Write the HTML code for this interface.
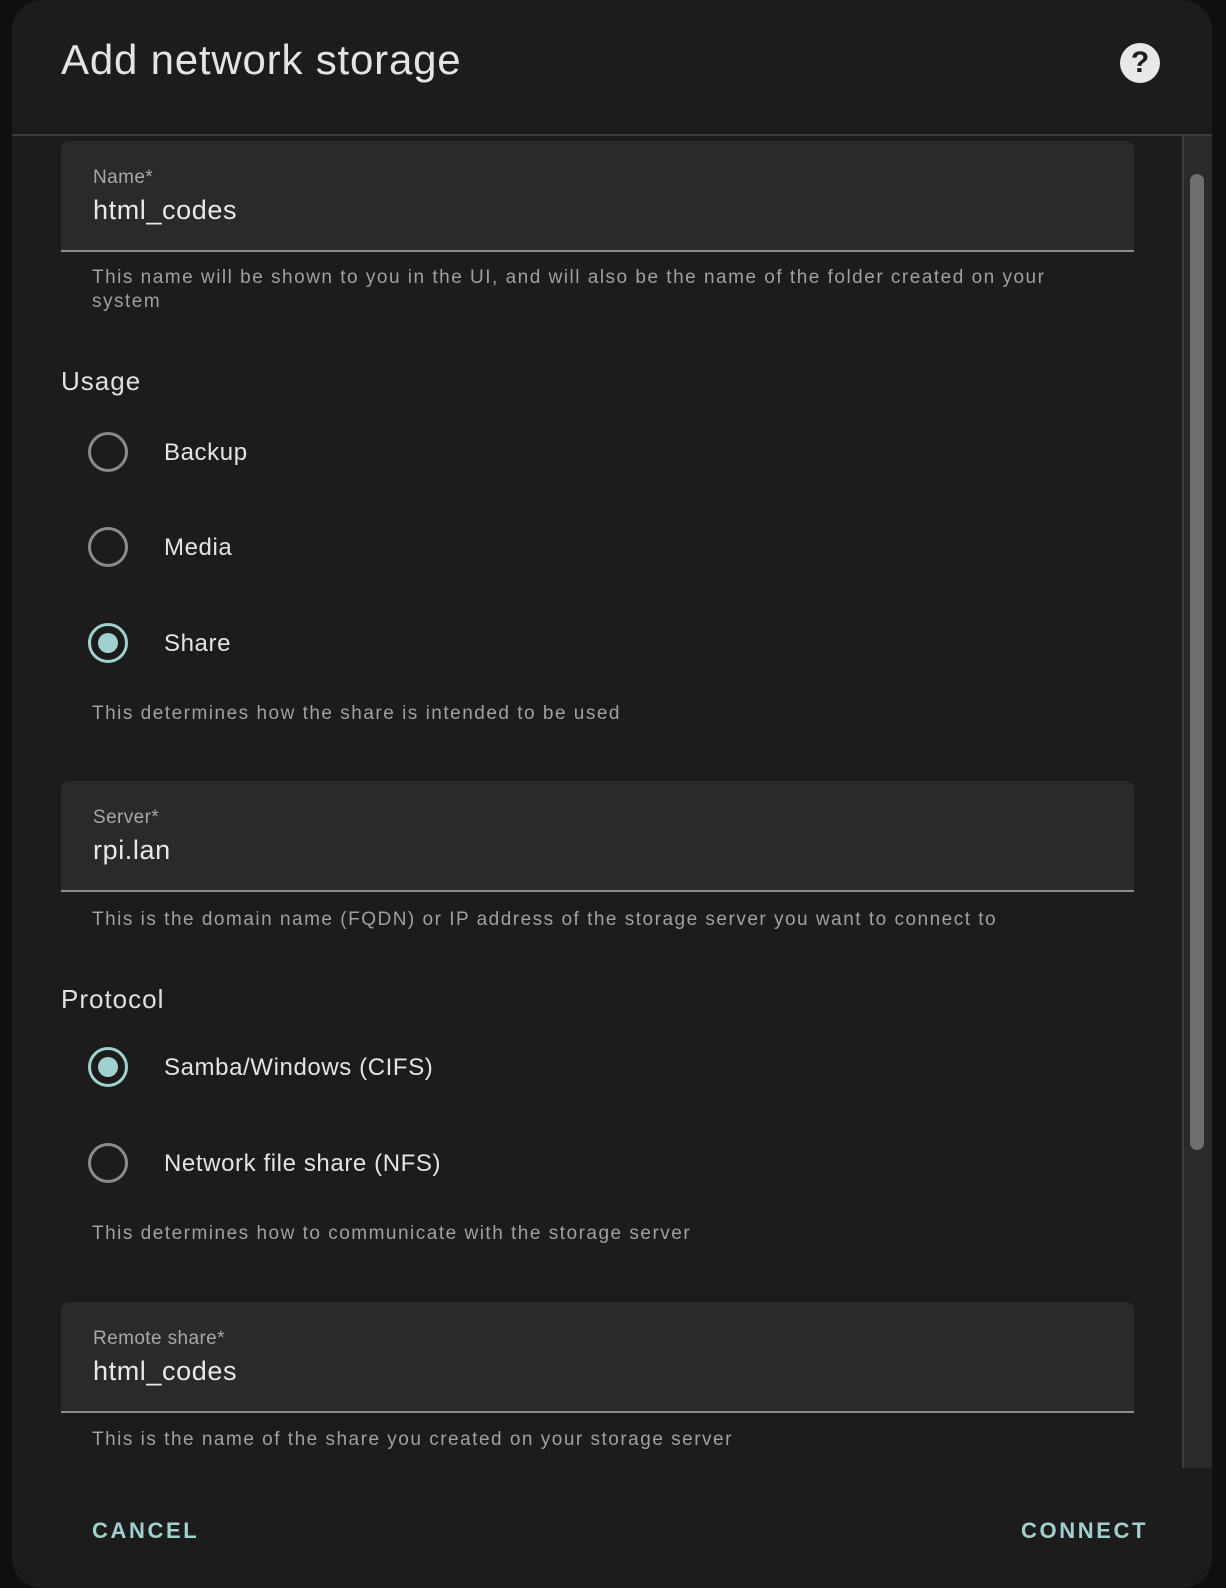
<!DOCTYPE html>
<html><head><meta charset="utf-8"><style>
*{margin:0;padding:0;box-sizing:border-box}
body{width:1226px;height:1588px;background:#0f0f0f;font-family:"Liberation Sans",sans-serif;position:relative;overflow:hidden}
.dlg{position:absolute;left:12px;top:0;width:1200px;height:1588px;background:#1c1c1c;border-radius:30px;overflow:hidden}
.a{position:absolute;white-space:nowrap}
.title{left:49px;top:36px;font-size:42px;color:#e4e4e4;letter-spacing:.8px}
.help{left:1108px;top:43px;width:40px;height:40px;border-radius:50%;background:#e8e8e8;color:#1c1c1c;font-weight:bold;font-size:30px;text-align:center;line-height:40px}
.div{left:0;top:134px;width:1200px;height:2px;background:#3a3a3a}
.track{left:1170px;top:136px;width:30px;height:1332px;background:#2a2a2a;border-left:2px solid #3c3c3c}
.thumb{left:1178px;top:174px;width:14px;height:976px;border-radius:7px;background:#6e6e6e}
.field{left:49px;width:1073px;height:111px;background:#2a2a2a;border-radius:8px 8px 0 0;border-bottom:2px solid #8a8a8a}
.lab{position:absolute;left:32px;top:26px;font-size:19px;color:#a8a8a8;letter-spacing:.4px}
.val{position:absolute;left:32px;top:54px;font-size:27px;color:#e8e8e8;letter-spacing:.6px}
.hint{left:80px;font-size:19px;color:#a0a0a0;letter-spacing:1.5px;line-height:24px}
.sec{left:49px;font-size:26px;color:#e0e0e0;letter-spacing:1px}
.r{position:absolute;left:76px;width:40px;height:40px;border-radius:50%;border:3px solid #8a8a8a}
.r.on{border-color:#a1d0cf}
.r.on::after{content:"";position:absolute;left:7px;top:7px;width:20px;height:20px;border-radius:50%;background:#a1d0cf}
.rl{left:152px;font-size:24px;color:#e4e4e4;letter-spacing:.6px}
.btn{font-size:22px;color:#a1d0cf;letter-spacing:2.6px;font-weight:bold}
</style></head><body>
<div class="dlg">
<div class="a title">Add network storage</div>
<div class="a help">?</div>
<div class="a div"></div>
<div class="a track"></div><div class="a thumb"></div>

<div class="a field" style="top:141px"><div class="lab">Name*</div><div class="val">html_codes</div></div>
<div class="a hint" style="top:266px">This name will be shown to you in the UI, and will also be the name of the folder created on your<br>system</div>

<div class="a sec" style="top:366px">Usage</div>
<div class="r" style="top:432px"></div><div class="a rl" style="top:439px">Backup</div>
<div class="r" style="top:527px"></div><div class="a rl" style="top:534px">Media</div>
<div class="r on" style="top:623px"></div><div class="a rl" style="top:630px">Share</div>
<div class="a hint" style="top:702px">This determines how the share is intended to be used</div>

<div class="a field" style="top:781px"><div class="lab">Server*</div><div class="val">rpi.lan</div></div>
<div class="a hint" style="top:908px">This is the domain name (FQDN) or IP address of the storage server you want to connect to</div>

<div class="a sec" style="top:984px">Protocol</div>
<div class="r on" style="top:1047px"></div><div class="a rl" style="top:1054px">Samba/Windows (CIFS)</div>
<div class="r" style="top:1143px"></div><div class="a rl" style="top:1150px">Network file share (NFS)</div>
<div class="a hint" style="top:1222px">This determines how to communicate with the storage server</div>

<div class="a field" style="top:1302px"><div class="lab">Remote share*</div><div class="val">html_codes</div></div>
<div class="a hint" style="top:1428px">This is the name of the share you created on your storage server</div>

<div class="a btn" style="left:80px;top:1518px">CANCEL</div>
<div class="a btn" style="right:64px;top:1518px">CONNECT</div>
</div>
</body></html>
